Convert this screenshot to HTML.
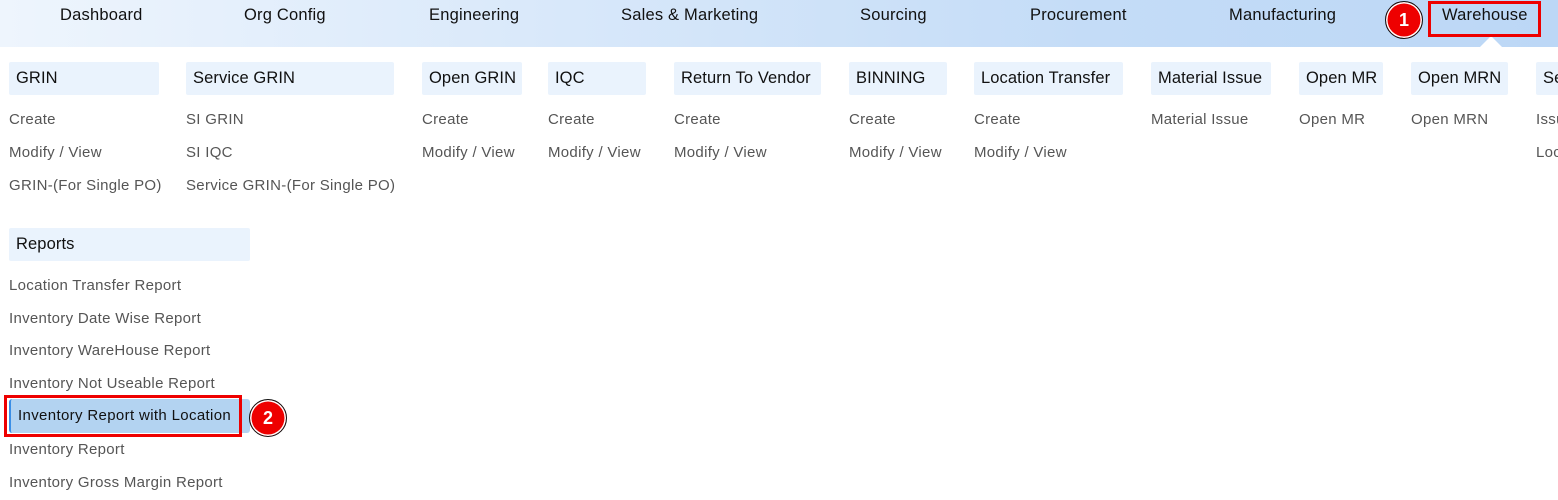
<!DOCTYPE html>
<html><head><style>
body{margin:0;width:1558px;height:500px;background:#fff;font-family:"Liberation Sans",sans-serif;position:relative;overflow:hidden}
.bar{position:absolute;left:0;top:0;width:1558px;height:47px;background:linear-gradient(90deg,#eef5fd,#c4dcf7 70%,#bcd7f6)}
.n{position:absolute;top:6px;font-size:16.5px;letter-spacing:0.2px;color:#111}
.h{position:absolute;top:62px;height:33px;line-height:33px;background:#eaf3fd;font-size:16.5px;letter-spacing:0.1px;color:#111;padding-left:7px;box-sizing:border-box;border-radius:2px;white-space:nowrap;overflow:hidden}
.i{position:absolute;font-size:15px;letter-spacing:0.3px;color:#555;white-space:nowrap}
.c{position:absolute;width:36px;height:36px;border-radius:50%;background:#e00;border:1.5px solid #111;box-shadow:0 0 0 1.5px #fff inset;color:#fff;font-weight:bold;font-size:18px;text-align:center;line-height:37px}
.r{position:absolute;border:3px solid #e00}
</style></head><body>
<div class="bar"></div>
<div class="n" style="left:60px">Dashboard</div>
<div class="n" style="left:244px">Org Config</div>
<div class="n" style="left:429px">Engineering</div>
<div class="n" style="left:621px">Sales &amp; Marketing</div>
<div class="n" style="left:860px">Sourcing</div>
<div class="n" style="left:1030px">Procurement</div>
<div class="n" style="left:1229px">Manufacturing</div>
<div class="n" style="left:1442px">Warehouse</div>
<div style="position:absolute;left:1480px;top:36px;width:0;height:0;border-left:11px solid transparent;border-right:11px solid transparent;border-bottom:11px solid #fff"></div>
<div class="r" style="left:1428px;top:1px;width:107px;height:30px"></div>
<div class="c" style="left:1385px;top:1px">1</div>

<div class="h" style="left:9px;width:150px">GRIN</div>
<div class="h" style="left:186px;width:208px">Service GRIN</div>
<div class="h" style="left:422px;width:100px">Open GRIN</div>
<div class="h" style="left:548px;width:98px">IQC</div>
<div class="h" style="left:674px;width:147px">Return To Vendor</div>
<div class="h" style="left:849px;width:98px">BINNING</div>
<div class="h" style="left:974px;width:149px">Location Transfer</div>
<div class="h" style="left:1151px;width:120px">Material Issue</div>
<div class="h" style="left:1299px;width:84px">Open MR</div>
<div class="h" style="left:1411px;width:97px">Open MRN</div>
<div class="h" style="left:1536px;width:40px">Se</div>

<div class="i" style="left:9px;top:111px">Create</div>
<div class="i" style="left:9px;top:144px">Modify / View</div>
<div class="i" style="left:9px;top:177px">GRIN-(For Single PO)</div>
<div class="i" style="left:186px;top:111px">SI GRIN</div>
<div class="i" style="left:186px;top:144px">SI IQC</div>
<div class="i" style="left:186px;top:177px">Service GRIN-(For Single PO)</div>
<div class="i" style="left:422px;top:111px">Create</div>
<div class="i" style="left:422px;top:144px">Modify / View</div>
<div class="i" style="left:548px;top:111px">Create</div>
<div class="i" style="left:548px;top:144px">Modify / View</div>
<div class="i" style="left:674px;top:111px">Create</div>
<div class="i" style="left:674px;top:144px">Modify / View</div>
<div class="i" style="left:849px;top:111px">Create</div>
<div class="i" style="left:849px;top:144px">Modify / View</div>
<div class="i" style="left:974px;top:111px">Create</div>
<div class="i" style="left:974px;top:144px">Modify / View</div>
<div class="i" style="left:1151px;top:111px">Material Issue</div>
<div class="i" style="left:1299px;top:111px">Open MR</div>
<div class="i" style="left:1411px;top:111px">Open MRN</div>
<div class="i" style="left:1536px;top:111px">Issu</div>
<div class="i" style="left:1536px;top:144px">Loc</div>

<div class="h" style="left:9px;width:241px;top:228px">Reports</div>
<div class="i" style="left:9px;top:277px">Location Transfer Report</div>
<div class="i" style="left:9px;top:310px">Inventory Date Wise Report</div>
<div class="i" style="left:9px;top:342px">Inventory WareHouse Report</div>
<div class="i" style="left:9px;top:375px">Inventory Not Useable Report</div>
<div style="position:absolute;left:9px;top:399px;width:241px;height:34px;background:#b3d3f1;border-left:2px solid #3a8ee6;border-radius:3px;box-sizing:border-box"></div>
<div class="i" style="left:18px;top:407px;color:#111;font-size:15px;letter-spacing:0.35px">Inventory Report with Location</div>
<div class="r" style="left:4px;top:395px;width:232px;height:36px"></div>
<div class="c" style="left:249px;top:399px">2</div>
<div class="i" style="left:9px;top:441px">Inventory Report</div>
<div class="i" style="left:9px;top:474px">Inventory Gross Margin Report</div>
</body></html>
